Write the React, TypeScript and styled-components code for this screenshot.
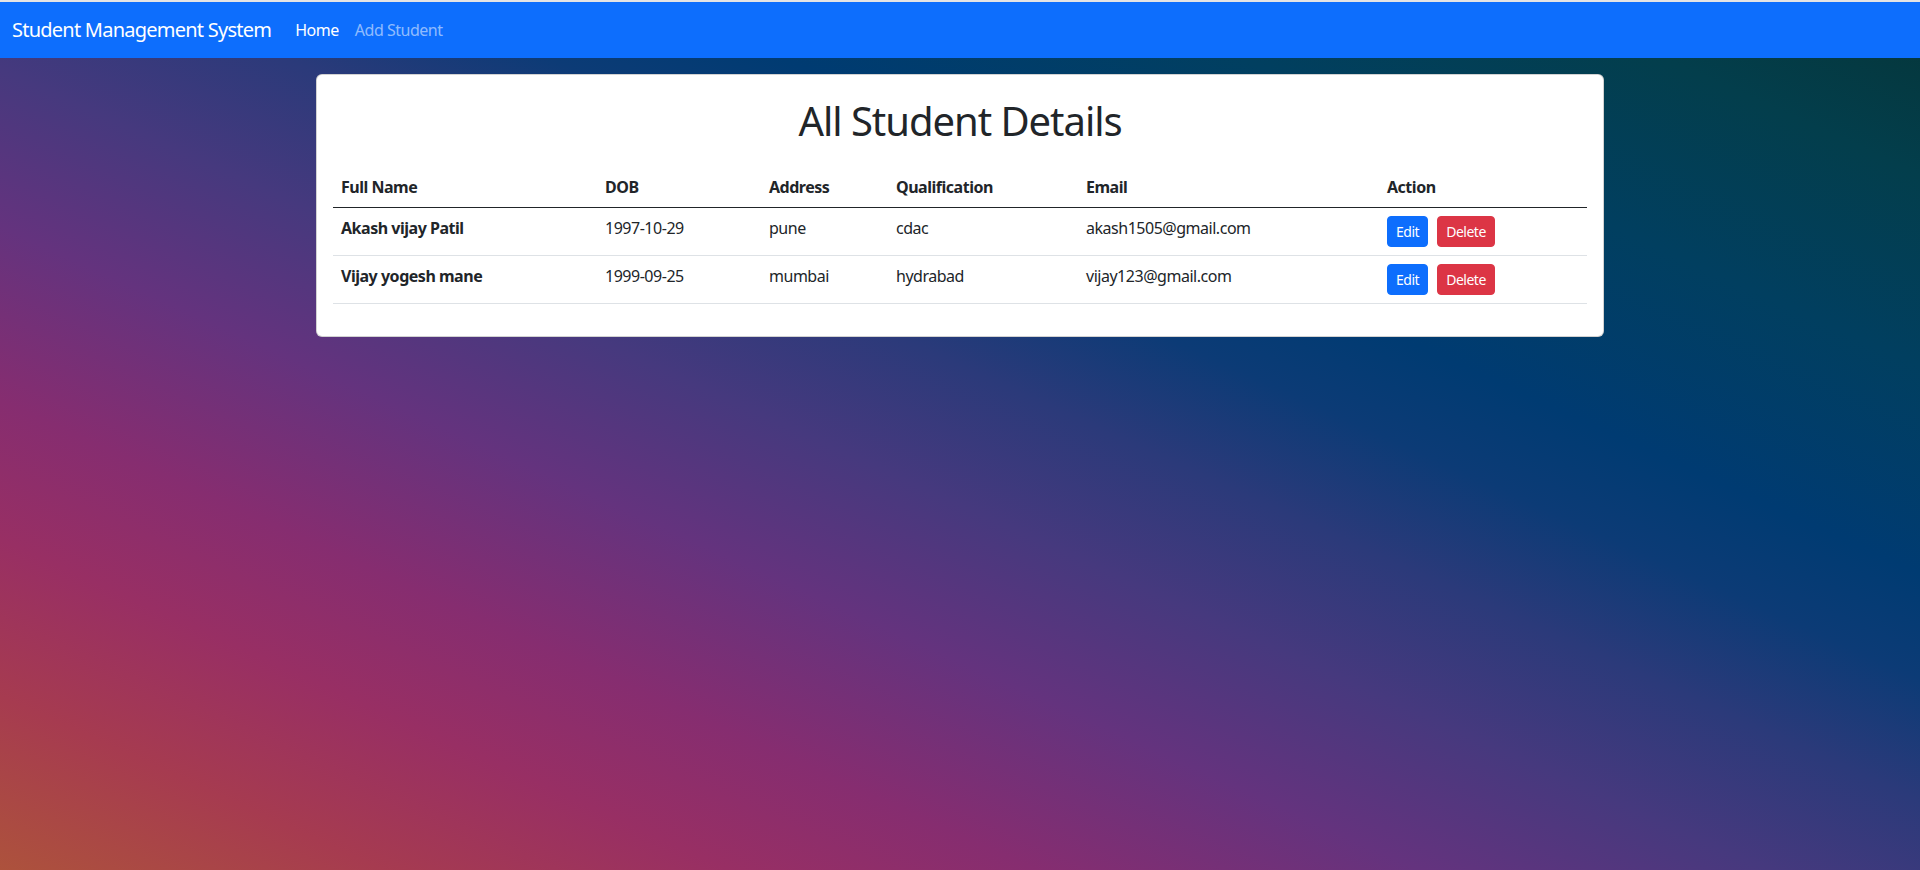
import React from "react";
import styled, { createGlobalStyle } from "styled-components";

const GlobalStyle = createGlobalStyle`
  html, body {
    margin: 0;
    padding: 0;
  }
  body {
    font-family: "Segoe UI", "Noto Sans", "Open Sans", Arial, sans-serif;
    color: #212529;
    font-size: 16px;
    line-height: 1.5;
    letter-spacing: -0.03em;
  }
  * { box-sizing: border-box; }
`;

const Page = styled.div`
  min-height: 100vh;
  border-top: 2px solid #e4e4e4;
  background-image: linear-gradient(
    to right top,
    #ad523c 0%,
    #a63b50 10%,
    #982f64 19%,
    #862d70 27%,
    #64337e 37%,
    #46397e 46%,
    #2b3a7a 54%,
    #0c3b76 61%,
    #003b72 67%,
    #013f60 79%,
    #033e4c 90%,
    #053538 100%
  );
  background-attachment: fixed;
`;

const NavBar = styled.nav`
  height: 56px;
  background: #0d6efd;
  display: flex;
  align-items: center;
  padding: 8px 12px;
`;

const Brand = styled.a`
  font-size: 20px;
  line-height: 30px;
  padding: 5px 0;
  margin-right: 16px;
  color: #ffffff;
  text-decoration: none;
  white-space: nowrap;
  letter-spacing: -0.038em;
`;

const NavList = styled.div`
  display: flex;
  align-items: center;
`;

const NavLink = styled.a<{ $active?: boolean }>`
  padding: 8px;
  font-size: 16px;
  line-height: 24px;
  color: ${(p) => (p.$active ? "#ffffff" : "rgba(255, 255, 255, 0.55)")};
  text-decoration: none;
  white-space: nowrap;
`;

const Main = styled.main`
  width: 1288px;
  margin: 16px auto 0;
`;

const Card = styled.section`
  background: #ffffff;
  border: 1px solid rgba(0, 0, 0, 0.175);
  border-radius: 6px;
  padding: 16px;
`;

const Title = styled.h1`
  margin: 6px 0 22px;
  text-align: center;
  font-size: 40px;
  line-height: 48px;
  font-weight: 400;
  color: #212529;
  letter-spacing: -0.026em;
`;

const Table = styled.table`
  width: 100%;
  border-collapse: collapse;
  table-layout: fixed;
  margin-bottom: 16px;
  vertical-align: top;
`;

const Col = styled.col<{ $w: number }>`
  width: ${(p) => p.$w}px;
`;

const HeadCell = styled.th`
  text-align: left;
  padding: 8px;
  font-weight: 700;
  font-size: 16px;
  line-height: 24px;
  border-bottom: 1px solid #212529;
  vertical-align: top;
`;

const Row = styled.tr`
  border-bottom: 1px solid #dee2e6;
`;

const NameCell = styled.th`
  text-align: left;
  padding: 8px;
  font-weight: 700;
  font-size: 16px;
  line-height: 24px;
  vertical-align: top;
`;

const Cell = styled.td`
  padding: 8px;
  font-size: 16px;
  line-height: 24px;
  vertical-align: top;
`;

const Actions = styled.div`
  display: flex;
  gap: 9px;
`;

const Button = styled.button<{ $variant: "primary" | "danger" }>`
  font-family: inherit;
  letter-spacing: inherit;
  font-size: 14px;
  line-height: 21px;
  padding: 4px 8px;
  border-radius: 4px;
  color: #ffffff;
  cursor: pointer;
  background: ${(p) => (p.$variant === "primary" ? "#0d6efd" : "#dc3545")};
  border: 1px solid ${(p) => (p.$variant === "primary" ? "#0d6efd" : "#dc3545")};
`;

type Student = {
  name: string;
  dob: string;
  address: string;
  qualification: string;
  email: string;
};

const students: Student[] = [
  {
    name: "Akash vijay Patil",
    dob: "1997-10-29",
    address: "pune",
    qualification: "cdac",
    email: "akash1505@gmail.com",
  },
  {
    name: "Vijay yogesh mane",
    dob: "1999-09-25",
    address: "mumbai",
    qualification: "hydrabad",
    email: "vijay123@gmail.com",
  },
];

const widths = [264, 164, 127, 190, 301, 208];
const headers = ["Full Name", "DOB", "Address", "Qualification", "Email", "Action"];

export default function App() {
  return (
    <>
      <GlobalStyle />
      <Page>
        <NavBar>
          <Brand href="#">Student Management System</Brand>
          <NavList>
            <NavLink $active href="#">Home</NavLink>
            <NavLink href="#">Add Student</NavLink>
          </NavList>
        </NavBar>
        <Main>
          <Card>
            <Title>All Student Details</Title>
            <Table>
              <colgroup>
                {widths.map((w, i) => (
                  <Col key={i} $w={w} />
                ))}
              </colgroup>
              <thead>
                <tr>
                  {headers.map((h) => (
                    <HeadCell key={h}>{h}</HeadCell>
                  ))}
                </tr>
              </thead>
              <tbody>
                {students.map((s) => (
                  <Row key={s.email}>
                    <NameCell scope="row">{s.name}</NameCell>
                    <Cell>{s.dob}</Cell>
                    <Cell>{s.address}</Cell>
                    <Cell>{s.qualification}</Cell>
                    <Cell>{s.email}</Cell>
                    <Cell>
                      <Actions>
                        <Button $variant="primary">Edit</Button>
                        <Button $variant="danger">Delete</Button>
                      </Actions>
                    </Cell>
                  </Row>
                ))}
              </tbody>
            </Table>
          </Card>
        </Main>
      </Page>
    </>
  );
}
